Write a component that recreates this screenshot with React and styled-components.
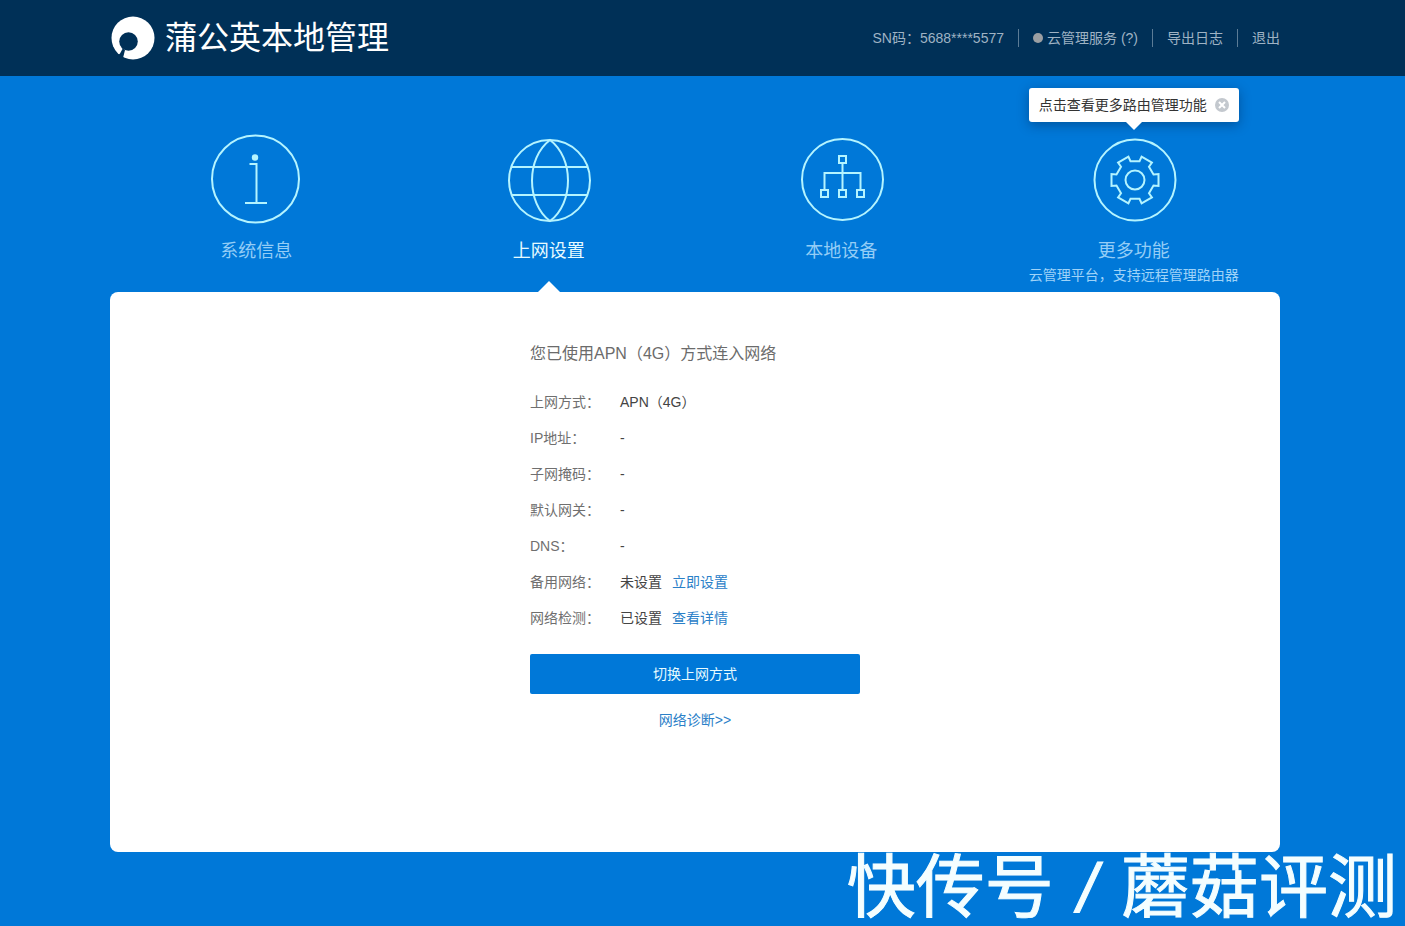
import React, { useState } from 'react';
import styled, { createGlobalStyle } from 'styled-components';

const GlobalStyle = createGlobalStyle`
  * {
    box-sizing: border-box;
  }

  body {
    margin: 0;
    background: #0078d8;
    font-family: 'Liberation Sans', 'Noto Sans CJK SC', sans-serif;
    font-size: 14px;
    line-height: 20px;
    color: #444;
  }
`;

const Page = styled.div`
  display: flex;
  flex-direction: column;
  min-height: 100vh;
`;

const TopBar = styled.header`
  padding: 0 15px 0 0;
  background: #003057;
`;

const Inner = styled.div`
  width: 100%;
  max-width: 1170px;
  margin: 0 auto;
`;

const TopBarInner = styled(Inner)`
  display: flex;
  align-items: center;
  justify-content: space-between;
  height: 76px;
`;

const Brand = styled.h1`
  display: flex;
  align-items: center;
  gap: 10px;
  margin: 0;
  color: #fff;
  font-size: 32px;
  font-weight: 400;
  line-height: 40px;
`;

const Tools = styled.ul`
  display: flex;
  align-items: center;
  margin: 0;
  padding: 0;
  list-style: none;
  color: #9fb3c4;
`;

const Tool = styled.li`
  display: flex;
  align-items: center;
  height: 18px;
  padding: 0 14px;

  & + & {
    border-left: 1px solid #5c7c96;
  }

  &:last-child {
    padding-right: 0;
  }
`;

const ToolLink = styled.a`
  display: flex;
  align-items: center;
  gap: 4px;
  color: inherit;
  text-decoration: none;
  white-space: pre;
`;

const Dot = styled.span`
  width: 10px;
  height: 10px;
  border-radius: 50%;
  background: #9b9fa3;
`;

const Main = styled.main`
  flex: 1;
  padding-right: 15px;
`;

const Nav = styled.nav`
  display: grid;
  grid-template-columns: repeat(4, 1fr);
  height: 216px;
`;

const NavItem = styled.div`
  position: relative;
  display: flex;
  justify-content: center;
  padding-top: 58px;
`;

const NavLink = styled.a`
  display: flex;
  flex-direction: column;
  align-items: center;
  color: ${(p) => (p.$active ? '#e6fbff' : '#94cdf6')};
  text-decoration: none;
`;

const NavLabel = styled.span`
  margin-top: 15px;
  font-size: 18px;
  line-height: 24px;
`;

const NavNote = styled.span`
  margin-top: 2px;
  color: #9fd3f8;
`;

const Pointer = styled.span`
  position: absolute;
  bottom: 0;
  left: 50%;
  border: solid transparent;
  border-width: 0 11px 11px;
  border-bottom-color: #fff;
  transform: translateX(-50%);
`;

const Tip = styled.div`
  position: absolute;
  top: 12px;
  left: 50%;
  display: flex;
  align-items: center;
  gap: 8px;
  height: 34px;
  padding: 0 10px;
  border-radius: 3px;
  background: #fff;
  box-shadow: 0 3px 12px rgba(0, 30, 70, 0.4);
  color: #333;
  white-space: nowrap;
  transform: translateX(-50%);

  &::after {
    content: '';
    position: absolute;
    top: 100%;
    left: 50%;
    border: solid transparent;
    border-width: 8px 8px 0;
    border-top-color: #fff;
    transform: translateX(-50%);
  }
`;

const CloseButton = styled.button`
  display: flex;
  padding: 0;
  border: 0;
  background: none;
  cursor: pointer;
`;

const Panel = styled.section`
  display: flex;
  justify-content: center;
  min-height: 560px;
  padding: 50px 20px;
  border-radius: 8px;
  background: #fff;
`;

const Status = styled.div`
  width: 330px;
`;

const StatusTitle = styled.h2`
  margin: 0 0 18px;
  color: #6b6b6b;
  font-size: 16px;
  font-weight: 400;
  line-height: 24px;
`;

const Fields = styled.dl`
  margin: 0 0 18px;
`;

const Field = styled.div`
  display: flex;
  line-height: 36px;
`;

const FieldName = styled.dt`
  width: 90px;
  color: #6f6f6f;
`;

const FieldValue = styled.dd`
  display: flex;
  gap: 10px;
  margin: 0;
`;

const TextLink = styled.a`
  color: #2a80c8;
  text-decoration: none;
`;

const SwitchButton = styled.button`
  width: 100%;
  height: 40px;
  border: 0;
  border-radius: 2px;
  background: #0078d8;
  color: #e6fbff;
  font: inherit;
  cursor: pointer;
`;

const Diagnose = styled.p`
  margin: 16px 0 0;
  text-align: center;
`;

const Signature = styled.footer`
  display: flex;
  justify-content: flex-end;
  gap: 24px;
  padding-right: 8px;
  color: #f4feff;
  font-size: 69px;
  line-height: 74px;
  white-space: nowrap;
  -webkit-text-stroke: 1px #f4feff;
`;

const lineProps = { fill: 'none', stroke: '#b4f4ff', strokeWidth: 2 };

const Logo = () => (
  <svg width="45" height="44" viewBox="0 0 45 44" aria-hidden="true">
    <circle cx="23" cy="22" r="21.5" fill="#fff" />
    <circle cx="18.5" cy="25.5" r="9.3" fill="#003057" />
    <path d="M11 31 L15 34 L12.5 44 H3 L10 37.5 L12.5 33 Z" fill="#003057" />
  </svg>
);

const InfoIcon = () => (
  <svg width="90" height="90" viewBox="0 0 90 90" {...lineProps}>
    <circle cx="44.5" cy="45" r="43.5" />
    <circle cx="44" cy="23.5" r="3.2" fill="#b4f4ff" stroke="none" />
    <path d="M38.5 30 H45.5 V68 M34 69 H56" />
  </svg>
);

const GlobeIcon = () => (
  <svg width="90" height="90" viewBox="0 0 90 90" {...lineProps}>
    <circle cx="45.5" cy="46.5" r="40.5" />
    <path d="M46 6 C22 24 22 69 46 87 C70 69 70 24 46 6 Z M8 33 H83 M8 61 H83" />
  </svg>
);

const DevicesIcon = () => (
  <svg width="90" height="90" viewBox="0 0 90 90" {...lineProps}>
    <circle cx="46.5" cy="45.5" r="40.5" />
    <path d="M46.5 29 V56 M28.5 56 V39 H64.5 V56" />
    <rect x="43" y="22" width="7" height="7" />
    <rect x="25" y="56" width="7" height="7" />
    <rect x="43" y="56" width="7" height="7" />
    <rect x="61" y="56" width="7" height="7" />
  </svg>
);

// one tooth of the gear, turned round the hub six times
const toothShape = [[18.5, -5.5], [23.5, -6], [23.5, 6], [18.5, 5.5]];
const gearPoints = [0, 60, 120, 180, 240, 300]
  .flatMap((deg) => {
    const a = (deg * Math.PI) / 180;
    return toothShape.map(([x, y]) => [
      x * Math.cos(a) - y * Math.sin(a),
      x * Math.sin(a) + y * Math.cos(a),
    ]);
  })
  .map(([x, y]) => `${(x + 46).toFixed(1)},${(y + 46).toFixed(1)}`)
  .join(' ');

const GearIcon = () => (
  <svg width="90" height="90" viewBox="0 0 90 90" {...lineProps}>
    <circle cx="46" cy="46" r="40.5" />
    <polygon points={gearPoints} />
    <circle cx="46" cy="46" r="9.5" />
  </svg>
);

const CloseIcon = () => (
  <svg width="14" height="14" viewBox="0 0 14 14">
    <circle cx="7" cy="7" r="7" fill="#c3c8ce" />
    <path d="M4 4 L10 10 M10 4 L4 10" stroke="#fff" strokeWidth="2" />
  </svg>
);

const navItems = [
  { id: 'info', label: '系统信息', icon: InfoIcon },
  { id: 'network', label: '上网设置', icon: GlobeIcon },
  { id: 'devices', label: '本地设备', icon: DevicesIcon },
  { id: 'more', label: '更多功能', icon: GearIcon, note: '云管理平台，支持远程管理路由器', tip: '点击查看更多路由管理功能' },
];

const fields = [
  { name: '上网方式：', value: 'APN（4G）' },
  { name: 'IP地址：', value: '-' },
  { name: '子网掩码：', value: '-' },
  { name: '默认网关：', value: '-' },
  { name: 'DNS：', value: '-' },
  { name: '备用网络：', value: '未设置', link: '立即设置' },
  { name: '网络检测：', value: '已设置', link: '查看详情' },
];

const App = () => {
  const [active, setActive] = useState('network');
  const [showTip, setShowTip] = useState(true);

  return (
    <Page>
      <GlobalStyle />
      <TopBar>
        <TopBarInner>
          <Brand><Logo />蒲公英本地管理</Brand>
          <Tools>
            <Tool>SN码：5688****5577</Tool>
            <Tool><ToolLink href="#cloud"><Dot />云管理服务 (?)</ToolLink></Tool>
            <Tool><ToolLink href="#log">导出日志</ToolLink></Tool>
            <Tool><ToolLink href="#logout">退出</ToolLink></Tool>
          </Tools>
        </TopBarInner>
      </TopBar>

      <Main>
        <Inner>
          <Nav>
            {navItems.map(({ id, label, icon: Icon, note, tip }) => (
              <NavItem key={id}>
                <NavLink href={`#${id}`} $active={active === id} onClick={() => setActive(id)}>
                  <Icon />
                  <NavLabel>{label}</NavLabel>
                  {note && <NavNote>{note}</NavNote>}
                </NavLink>
                {tip && showTip && (
                  <Tip role="tooltip">
                    {tip}
                    <CloseButton type="button" aria-label="关闭" onClick={() => setShowTip(false)}>
                      <CloseIcon />
                    </CloseButton>
                  </Tip>
                )}
                {active === id && <Pointer />}
              </NavItem>
            ))}
          </Nav>

          <Panel>
            <Status>
              <StatusTitle>您已使用APN（4G）方式连入网络</StatusTitle>
              <Fields>
                {fields.map((f) => (
                  <Field key={f.name}>
                    <FieldName>{f.name}</FieldName>
                    <FieldValue>
                      {f.value}
                      {f.link && <TextLink href="#settings">{f.link}</TextLink>}
                    </FieldValue>
                  </Field>
                ))}
              </Fields>
              <SwitchButton type="button">切换上网方式</SwitchButton>
              <Diagnose><TextLink href="#diagnose">网络诊断&gt;&gt;</TextLink></Diagnose>
            </Status>
          </Panel>
        </Inner>
      </Main>

      <Signature>
        <span>快传号</span>
        <em>/</em>
        <span>蘑菇评测</span>
      </Signature>
    </Page>
  );
};

export default App;
